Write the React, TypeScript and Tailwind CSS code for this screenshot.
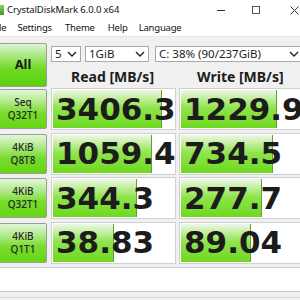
import React from "react";

const rows = [
  { a: "Seq", b: "Q32T1", read: "3406.3", rw: 109, write: "1229.9", ww: 96 },
  { a: "4KiB", b: "Q8T8", read: "1059.4", rw: 99, write: "734.5", ww: 92 },
  { a: "4KiB", b: "Q32T1", read: "344.3", rw: 84, write: "277.7", ww: 81 },
  { a: "4KiB", b: "Q1T1", read: "38.83", rw: 61, write: "89.04", ww: 70 },
];

const ui = { fontFamily: '"Noto Sans", "Liberation Sans", sans-serif' };
const big = { fontFamily: '"DejaVu Sans", "Liberation Sans", sans-serif' };

function Chevron() {
  return (
    <svg width="10" height="6" viewBox="0 0 10 6" className="shrink-0">
      <path d="M1 1 L5 5 L9 1" fill="none" stroke="#222" strokeWidth="1.4" />
    </svg>
  );
}

function Select({ w, text }: { w: string; text: string }) {
  return (
    <div
      className={`${w} h-[16px] flex items-center justify-between border border-[#a9a9a9] bg-white pl-[3px] pr-[3px] text-[11.5px] leading-none text-[#222]`}
      style={ui}
    >
      <span className="whitespace-nowrap">{text}</span>
      <Chevron />
    </div>
  );
}

function Result({ value, bar, w }: { value: string; bar: number; w: string }) {
  return (
    <div className={`${w} shrink-0 h-[42px] border border-[#d0d0d0] bg-white p-[1px] relative overflow-hidden`}>
      <div
        className="h-full border-r border-[#5aa33a] bg-[linear-gradient(to_bottom,#eef6ea_0%,#c6f0a4_20%,#8fe34c_48%,#78dc2c_85%,#6fd822_100%)]"
        style={{ width: bar }}
      />
      <span
        className="absolute left-[4px] top-0 h-full flex items-center text-[31px] font-bold leading-none text-[#1c1c1c] whitespace-nowrap"
        style={big}
      >
        {value}
      </span>
    </div>
  );
}

export default function App() {
  return (
    <div className="w-[300px] h-[300px] overflow-hidden bg-[#f0f0f0] flex flex-col">
      {/* title bar */}
      <div className="h-[20px] bg-white flex items-center shrink-0 relative" style={ui}>
        <div className="w-[4px] h-[10px] bg-[linear-gradient(to_bottom,#8fd16a,#3c9a2a)] ml-0" />
        <span className="ml-[3px] text-[9.5px] text-[#111] tracking-[-0.1px]">CrystalDiskMark 6.0.0 x64</span>
        <div className="ml-auto flex items-center">
          <div className="w-[8px] h-px bg-[#333] mr-[27px]" />
          <div className="w-[8px] h-[8px] border border-[#555] mr-[30px]" />
          <svg width="9" height="9" viewBox="0 0 9 9" className="mr-[1px]">
            <path d="M0.5 0.5 L8.5 8.5 M8.5 0.5 L0.5 8.5" stroke="#333" strokeWidth="1" />
          </svg>
        </div>
      </div>
      {/* menu */}
      <div
        className="h-[17px] bg-white flex items-center shrink-0 text-[9.5px] text-[#111] border-b border-[#e6e6e6] tracking-[-0.2px]"
        style={ui}
      >
        <span className="-ml-[1px]">le</span>
        <span className="ml-[11px]">Settings</span>
        <span className="ml-[13px]">Theme</span>
        <span className="ml-[13px]">Help</span>
        <span className="ml-[11px]">Language</span>
      </div>

      {/* top controls */}
      <div className="flex mt-[6px] shrink-0">
        <div
          className="w-[48px] h-[44px] shrink-0 border border-[#9c9c9c] rounded-[2px] -ml-px flex items-center justify-center bg-[linear-gradient(to_bottom,#dff5d4_0%,#a5e77a_30%,#6fda22_60%,#5ccf0c_100%)] text-[13px] font-bold text-[#1a1a1a]"
          style={ui}
        >
          All
        </div>
        <div className="flex flex-col ml-[4px]">
          <div className="flex gap-[4px] mt-[3px]">
            <Select w="w-[30px]" text="5" />
            <Select w="w-[64px]" text="1GiB" />
            <div className="ml-[2px]">
              <Select w="w-[148px]" text="C: 38% (90/237GiB)" />
            </div>
          </div>
          <div className="flex mt-[8px] text-[14px] font-bold text-[#1c1c1c] leading-none" style={ui}>
            <span className="ml-[20px]">Read [MB/s]</span>
            <span className="ml-[43px]">Write [MB/s]</span>
          </div>
        </div>
      </div>

      {/* result rows */}
      <div className="flex flex-col gap-[2.6px] mt-[1px] shrink-0">
        {rows.map((r, i) => (
          <div key={i} className="flex items-center">
            <div
              className="w-[48px] h-[40px] shrink-0 -ml-px border border-[#9c9c9c] rounded-[2px] flex flex-col items-center justify-center bg-[linear-gradient(to_bottom,#e2f6d8_0%,#b2ea8c_30%,#78dc2e_60%,#66d614_100%)] text-[10px] leading-[13px] font-medium text-[#262626]"
              style={ui}
            >
              <span>{r.a}</span>
              <span>{r.b}</span>
            </div>
            <div className="ml-[4px]">
              <Result value={r.read} bar={r.rw} w="w-[125px]" />
            </div>
            <div className="ml-[3px]">
              <Result value={r.write} bar={r.ww} w="w-[126px]" />
            </div>
          </div>
        ))}
      </div>

      {/* comment box */}
      <div className="mt-[3px] h-[25px] shrink-0 bg-white border border-[#c8c8c8] -mx-px" />
      <div className="mt-[5px] h-px bg-[#dadada] shrink-0" />
    </div>
  );
}
